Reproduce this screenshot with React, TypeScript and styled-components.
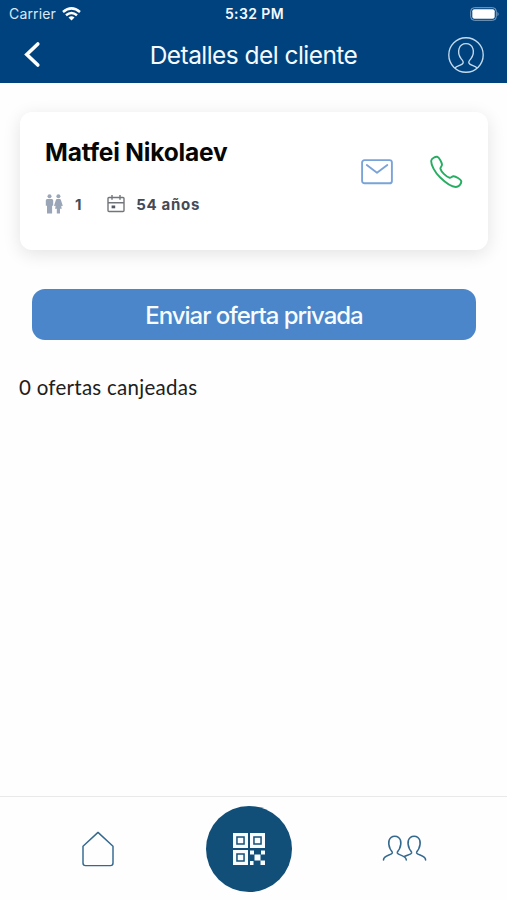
import React from "react";
import styled, { createGlobalStyle } from "styled-components";

const GlobalStyle = createGlobalStyle`
  * { box-sizing: border-box; }
  body { margin: 0; background: #fefefe; font-family: Inter, "Liberation Sans", sans-serif; }
  svg { display: block; flex: none; }
  button { border: 0; padding: 0; background: none; font: inherit; color: inherit; }
`;

const Screen = styled.div`
  display: flex;
  flex-direction: column;
  height: 900px;
  width: 507px;
  overflow: hidden;
  background: #fefefe;
`;

const TopArea = styled.header`
  height: 83px;
  background: #00427e;
  color: #f4faff;
`;

const StatusBar = styled.div`
  display: grid;
  grid-template-columns: 1fr auto 1fr;
  align-items: center;
  height: 27px;
  padding: 0 7px 0 9px;
`;

const Carrier = styled.div`
  display: flex;
  align-items: center;
  gap: 6px;
  font-size: 14px;
  line-height: 26px;
  letter-spacing: 0.15px;
  color: #dbe8f4;
`;

const Clock = styled.div`
  font-size: 14px;
  font-weight: 600;
  letter-spacing: 0.4px;
  line-height: 28px;
`;

const BatterySlot = styled.div`
  display: flex;
  justify-content: flex-end;
`;

const NavBar = styled.div`
  display: grid;
  grid-template-columns: 60px 1fr 60px;
  align-items: center;
  height: 56px;
`;

const Title = styled.h1`
  margin: 0;
  text-align: center;
  font-size: 24.5px;
  font-weight: 400;
  line-height: 56px;
  letter-spacing: -0.55px;
  white-space: nowrap;
`;

const BackButton = styled.button`
  padding-left: 22px;
`;

const ProfileButton = styled.button`
  justify-self: start;
`;

const Content = styled.main`
  flex: 1;
  padding: 29px 19px 0 20px;
`;

const Card = styled.section`
  display: flex;
  justify-content: space-between;
  height: 138px;
  padding: 0 25px 0 25px;
  border-radius: 12px;
  background: #fff;
  box-shadow: 0 4px 18px rgba(0, 0, 0, 0.11);
`;

const Name = styled.h2`
  margin: 24px 0 0;
  font-size: 24.5px;
  font-weight: 700;
  line-height: 32px;
  letter-spacing: -0.18px;
  color: #060606;
  white-space: nowrap;
`;

const Facts = styled.div`
  display: flex;
  gap: 25px;
  margin-top: 26px;
`;

const Fact = styled.div<{ $gap: number }>`
  display: flex;
  align-items: center;
  gap: ${(p) => p.$gap}px;
  height: 20px;
  font-size: 15px;
  font-weight: 700;
  letter-spacing: 0.7px;
  color: #454a54;
`;

const Actions = styled.div`
  display: flex;
  align-items: center;
  gap: 36px;
  height: 120px;
`;

const OfferButton = styled.button`
  display: block;
  width: 444px;
  height: 51px;
  margin: 39px 0 0 12px;
  padding-top: 1px;
  border-radius: 13px;
  background: #4a86c9;
  color: #f8fcff;
  font-size: 24px;
  font-weight: 500;
  letter-spacing: -1.03px;
  line-height: 51px;
`;

const Redeemed = styled.p`
  margin: 33px 0 0 -1px;
  font-family: Lato, "Open Sans", sans-serif;
  font-size: 20.5px;
  line-height: 28px;
  letter-spacing: 0.27px;
  color: #202020;
`;

const TabBar = styled.nav`
  display: grid;
  grid-template-columns: 195px 108px 204px;
  align-items: center;
  justify-items: center;
  height: 104px;
  border-top: 1px solid #e9e9e9;
`;

const Tab = styled.button`
  display: flex;
  color: #34698f;
`;

const ScanButton = styled.button`
  display: grid;
  place-items: center;
  width: 86px;
  height: 86px;
  border-radius: 50%;
  background: #124f78;
`;

const WifiIcon = () => (
  <svg width="19" height="14" viewBox="0 0 19 14" fill="none" stroke="#fff" strokeWidth="2.5">
    <path d="M1 5 Q9.5 -2.2 18 5" />
    <path d="M4 8.3 Q9.5 3.7 15 8.3" />
    <path d="M6.5 10.5 Q9.5 8.2 12.5 10.5 L9.5 13.6Z" fill="#fff" stroke="none" />
  </svg>
);

const BatteryIcon = () => (
  <svg width="30" height="14" viewBox="0 0 30 14">
    <rect x=".7" y=".7" width="25.6" height="12.6" rx="3.6" fill="none" stroke="#7fa2c3" />
    <rect x="2.3" y="2.3" width="22.4" height="9.4" rx="2" fill="#fff" />
    <path d="M27.5 4.7 Q29.7 7 27.5 9.3Z" fill="#7fa2c3" />
  </svg>
);

const BackIcon = () => (
  <svg width="20" height="28" viewBox="0 0 20 28" fill="none" stroke="#fff" strokeWidth="3.6">
    <path d="M15.8 3 L4.8 13.5 L15.8 24" strokeLinecap="round" />
  </svg>
);

const ProfileIcon = () => (
  <svg width="38" height="38" viewBox="0 0 38 38" fill="none" stroke="#c5dbed" strokeWidth="1.35">
    <circle cx="19" cy="19" r="17.2" />
    <path d="M8 32 C10 29.5 15.6 29.5 16.2 26.6 C16.5 25 15.4 24.4 14.2 22.8 C9.2 16 12 7.6 19 7.6 S28.8 16 23.8 22.8 C22.6 24.4 21.5 25 21.8 26.6 C22.4 29.5 28 29.5 30 32" />
  </svg>
);

const PeopleIcon = () => (
  <svg width="18" height="20" viewBox="0 0 18 20" fill="#9aa6b8">
    <circle cx="4.5" cy="2.2" r="2" />
    <path d="M2.2 5H6.8Q8.2 5 8.2 6.5V11.8H7.1V19.5H2V11.8H.8V6.5Q.8 5 2.2 5Z" />
    <circle cx="13.4" cy="2.2" r="2" />
    <path d="M12 5H14.8Q15.6 5 15.9 6L17.8 11.8L16.4 12.2L15.9 11.3L16.8 14.8H15V19.5H11.8V14.8H10L10.9 11.3L10.4 12.2L9 11.8L10.9 6Q11.2 5 12 5Z" />
  </svg>
);

const CalendarIcon = () => (
  <svg width="18" height="18" viewBox="0 0 18 18" fill="none" stroke="#72757b" strokeWidth="1.4">
    <rect x="1" y="2.5" width="16" height="14" rx="1" />
    <path d="M1 7.7H17M5 0V4.7M13 0V4.7" />
    <rect x="4.6" y="10.5" width="3.6" height="2.8" fill="#555961" stroke="none" />
  </svg>
);

const MailIcon = () => (
  <svg width="32" height="26" viewBox="0 0 32 26" fill="none" stroke="#7aa3d8" strokeWidth="1.9" strokeLinecap="round" strokeLinejoin="round">
    <rect x="1.1" y="1.1" width="29.8" height="23.2" rx="2.4" />
    <path d="M5.8 6L16 13.8L26.3 6" />
  </svg>
);

const PhoneIcon = () => (
  <svg width="34" height="34" viewBox="0 0 34 34" fill="none" stroke="#27ad62" strokeWidth="1.9" strokeLinejoin="round">
    <path d="M2.3 5.4C1.6 9.5 6 17.5 11 22.3C16.2 27.4 23.5 32.8 28 31.8C30.2 31.3 32.2 28.7 32.3 26.6C32.3 24.3 26.2 21 24.4 21.2C22.9 21.4 22 23 20.6 22.7C17.5 22.1 12.1 16.8 11.4 13.8C11.1 12.4 13 11.3 13 9.8C13 7.8 10.2 2.2 8.2 1.8C6.2 1.5 2.7 3.6 2.3 5.4Z" />
  </svg>
);

const HomeIcon = () => (
  <svg width="34" height="36" viewBox="0 0 34 36" fill="none" stroke="currentColor" strokeWidth="1.45" strokeLinejoin="round">
    <path d="M2 15.3L17 1.4L32 15.3V32Q32 34.6 29.5 34.6H4.5Q2 34.6 2 32Z" />
  </svg>
);

const QrIcon = () => (
  <svg width="32" height="32" viewBox="0 0 32 32" fill="#f8fcff">
    <path fillRule="evenodd" d="M0 0H15V15H0ZM3.2 3.2V11.8H11.8V3.2ZM17 0H32V15H17ZM20.2 3.2V11.8H28.8V3.2ZM0 17H15V32H0ZM3.2 20.2V28.8H11.8V20.2Z" />
    <path d="M4.7 4.7H10.3V10.3H4.7ZM21.7 4.7H27.3V10.3H21.7ZM4.7 21.7H10.3V27.3H4.7ZM17 17.5H21V21.5H17ZM28 17.5H32V21.5H28ZM21.5 21.5H27.5V27.5H21.5ZM17 28H20.5V32H17ZM27.5 27.5H32V32H27.5Z" />
  </svg>
);

const ClientsIcon = () => (
  <svg width="46" height="28" viewBox="0 0 46 28" fill="none" stroke="currentColor" strokeWidth="1.55" strokeLinecap="round" strokeLinejoin="round">
    <path d="M1.5 25C1.5 20 9.5 20.5 10.3 18C10.6 16.7 9.2 15.9 8.2 14C5.2 8 6.8 1.2 12.8 1.2S20.4 8 17.4 14C16.4 15.9 15 16.7 15.3 18C16 20.5 24.3 20 24.3 25" />
    <path d="M22.8 21.3C25.5 19.8 29 19.8 29.6 18C29.9 16.7 28.5 15.9 27.5 14C24.5 8 26.1 1.2 32.1 1.2S39.7 8 36.7 14C35.7 15.9 34.3 16.7 34.6 18C35.4 20.5 43.6 20 43.6 25" />
  </svg>
);

export default function App() {
  return (
    <>
      <GlobalStyle />
      <Screen>
        <TopArea>
          <StatusBar>
            <Carrier>Carrier <WifiIcon /></Carrier>
            <Clock>5:32 PM</Clock>
            <BatterySlot><BatteryIcon /></BatterySlot>
          </StatusBar>
          <NavBar>
            <BackButton aria-label="Volver"><BackIcon /></BackButton>
            <Title>Detalles del cliente</Title>
            <ProfileButton aria-label="Perfil"><ProfileIcon /></ProfileButton>
          </NavBar>
        </TopArea>
        <Content>
          <Card>
            <div>
              <Name>Matfei Nikolaev</Name>
              <Facts>
                <Fact $gap={12}><PeopleIcon />1</Fact>
                <Fact $gap={11}><CalendarIcon />54 años</Fact>
              </Facts>
            </div>
            <Actions>
              <button aria-label="Correo"><MailIcon /></button>
              <button aria-label="Llamar"><PhoneIcon /></button>
            </Actions>
          </Card>
          <OfferButton>Enviar oferta privada</OfferButton>
          <Redeemed>0 ofertas canjeadas</Redeemed>
        </Content>
        <TabBar>
          <Tab aria-label="Inicio"><HomeIcon /></Tab>
          <ScanButton aria-label="Escanear"><QrIcon /></ScanButton>
          <Tab aria-label="Clientes"><ClientsIcon /></Tab>
        </TabBar>
      </Screen>
    </>
  );
}
